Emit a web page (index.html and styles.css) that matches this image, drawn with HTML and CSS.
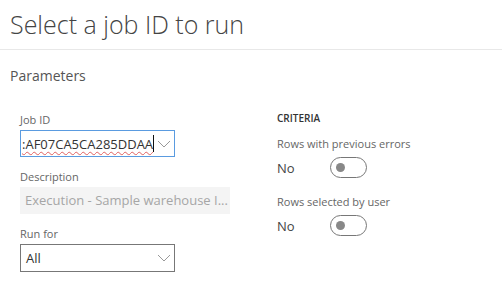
FILE: index.html
```html
<!DOCTYPE html>
<html lang="en">
<head>
    <meta charset="UTF-8">
    <title>Select a job ID to run</title>
    <link rel="stylesheet" href="styles.css">
</head>
<body>

    <h1 class="page-title">Select a job ID to run</h1>

    <h2 class="section-title">Parameters</h2>

    <div class="columns">
        <div class="col-left">
            <div class="field">
                <label>Job ID</label>
                <div class="combo combo-active">
                    <span class="combo-text"><span class="misspelled">:AF07CA5CA285DDAA</span><span class="caret"></span></span>
                    <svg class="chevron" width="14" height="8" viewBox="0 0 14 8"><polyline points="1,1 7,7 13,1" fill="none" stroke="#999" stroke-width="1"/></svg>
                </div>
            </div>
            <div class="field">
                <label>Description</label>
                <div class="readonly">Execution - Sample warehouse I...</div>
            </div>
            <div class="field">
                <label>Run for</label>
                <div class="combo">
                    <span class="combo-text">All</span>
                    <svg class="chevron" width="14" height="8" viewBox="0 0 14 8"><polyline points="1,1 7,7 13,1" fill="none" stroke="#999" stroke-width="1"/></svg>
                </div>
            </div>
        </div>

        <div class="col-right">
            <div class="group-title">CRITERIA</div>
            <div class="toggle-field">
                <label>Rows with previous errors</label>
                <div class="toggle-row">
                    <span class="toggle-value">No</span>
                    <span class="toggle"><span class="knob"></span></span>
                </div>
            </div>
            <div class="toggle-field">
                <label>Rows selected by user</label>
                <div class="toggle-row">
                    <span class="toggle-value">No</span>
                    <span class="toggle"><span class="knob"></span></span>
                </div>
            </div>
        </div>
    </div>

</body>
</html>
```

FILE: styles.css
```css
body {
    margin: 0;
    font-family: "Open Sans", "Noto Sans", Arial, sans-serif;
    color: #333;
    background-color: #ffffff;
}
.page-title {
    margin: 0;
    padding: 0 10px;
    height: 49px;
    line-height: 48px;
    font-size: 25px;
    font-weight: 300;
    color: #444;
    border-bottom: 1px solid #e8e8e8;
}
.section-title {
    margin: 0;
    padding: 16px 10px 0;
    line-height: 20px;
    font-size: 14px;
    font-weight: 400;
    color: #555;
}
.columns {
    display: flex;
    padding-top: 24px;
}
.col-left {
    width: 257px;
    padding-left: 20px;
    padding-top: 2px;
}
label {
    display: block;
    font-size: 11px;
    line-height: 16px;
    color: #666;
}
.field {
    margin-bottom: 12px;
}
.field label {
    margin-bottom: 2px;
}
.combo {
    width: 155px;
    height: 28px;
    box-sizing: border-box;
    border: 1px solid #777;
    display: flex;
    align-items: center;
    justify-content: space-between;
    padding: 0 3px 0 5px;
}
.combo-active {
    height: 27px;
    border-color: #5a9be0;
    padding-left: 1px;
}
.combo-text {
    font-size: 13px;
    color: #333;
    white-space: nowrap;
    display: flex;
    align-items: center;
}
.misspelled {
    text-decoration: underline wavy #e06060;
    text-decoration-thickness: 1px;
    text-underline-offset: 2px;
}
.caret {
    display: inline-block;
    width: 1px;
    height: 17px;
    background-color: #111;
}
.chevron {
    display: block;
}
.readonly {
    width: 210px;
    height: 27px;
    box-sizing: border-box;
    background-color: #f4f4f4;
    padding-left: 5px;
    line-height: 27px;
    font-size: 13px;
    color: #a6a6a6;
    white-space: nowrap;
}
.group-title {
    font-size: 10px;
    font-weight: 600;
    line-height: 16px;
    color: #333;
    margin-bottom: 10px;
}
.toggle-field {
    margin-bottom: 16px;
}
.toggle-field label {
    margin-bottom: 5px;
}
.toggle-row {
    display: flex;
    align-items: center;
    height: 21px;
}
.toggle-value {
    width: 53px;
    font-size: 13px;
    color: #444;
}
.toggle {
    width: 37px;
    height: 21px;
    box-sizing: border-box;
    border: 1px solid #777;
    border-radius: 11px;
    display: flex;
    align-items: center;
    padding-left: 5px;
}
.knob {
    width: 9px;
    height: 9px;
    border-radius: 50%;
    background-color: #888;
}
```
